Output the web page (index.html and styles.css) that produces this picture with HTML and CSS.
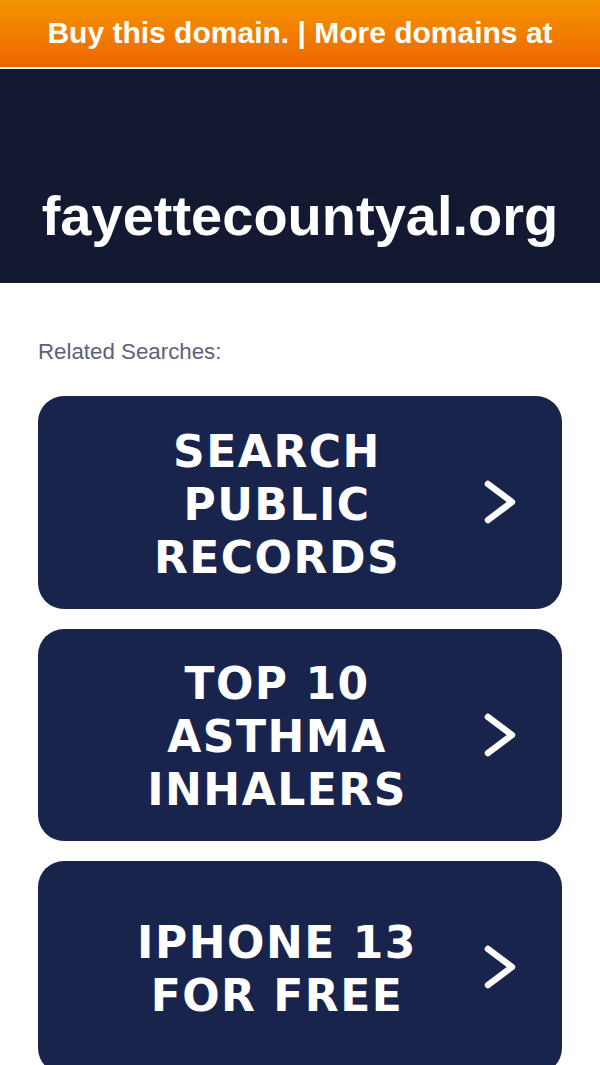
FILE: index.html
```html
<!DOCTYPE html>
<html lang="en">
<head>
<meta charset="utf-8">
<meta name="viewport" content="width=device-width, initial-scale=1">
<title>fayettecountyal.org</title>
<link rel="stylesheet" href="styles.css">
</head>
<body>
<div class="topbar">Buy this domain. | More domains at</div>
<header class="hero">
  <h1 class="domain">fayettecountyal.org</h1>
</header>
<main class="content">
  <p class="related">Related Searches:</p>
  <div class="links">
    <a class="link" href="#">
      <span class="link-text">SEARCH<br>PUBLIC<br>RECORDS</span>
      <svg class="chev" viewBox="0 0 32 48" width="32" height="48"><path d="M4 6 L28 24 L4 42" fill="none" stroke="#fff" stroke-width="6.5" stroke-linecap="round" stroke-linejoin="round"/></svg>
    </a>
    <a class="link" href="#">
      <span class="link-text">TOP 10<br>ASTHMA<br>INHALERS</span>
      <svg class="chev" viewBox="0 0 32 48" width="32" height="48"><path d="M4 6 L28 24 L4 42" fill="none" stroke="#fff" stroke-width="6.5" stroke-linecap="round" stroke-linejoin="round"/></svg>
    </a>
    <a class="link" href="#">
      <span class="link-text">IPHONE 13<br>FOR FREE</span>
      <svg class="chev" viewBox="0 0 32 48" width="32" height="48"><path d="M4 6 L28 24 L4 42" fill="none" stroke="#fff" stroke-width="6.5" stroke-linecap="round" stroke-linejoin="round"/></svg>
    </a>
  </div>
</main>
</body>
</html>
```
FILE: styles.css
```css
* { box-sizing: border-box; }
html, body { margin: 0; padding: 0; background: #fff; }
body { font-family: "Liberation Sans", Arial, sans-serif; overflow: hidden; }

.topbar {
  height: 69px;
  line-height: 66px;
  text-align: center;
  color: #fff;
  font-weight: bold;
  font-size: 30px;
  white-space: nowrap;
  background: linear-gradient(to bottom, #f59500, #ee6600);
  border-bottom: 2px solid #fff;
}

.hero {
  background: #121931;
  padding: 115px 0 35px;
  text-align: center;
}
.domain {
  margin: 0;
  color: #fff;
  font-size: 56px;
  line-height: 64px;
  font-weight: bold;
}

.content { padding: 0 38px; }
.related {
  margin: 56px 0 31px;
  font-size: 22.3px;
  line-height: 26px;
  color: #5b6279;
}
.links { display: flex; flex-direction: column; gap: 20px; }
.link {
  display: flex;
  align-items: center;
  height: 212.5px;
  padding: 0 46px 0 40px;
  background: #19244d;
  border-radius: 26px;
  text-decoration: none;
}
.link-text {
  flex: 1;
  text-align: center;
  color: #fff;
  font-family: "DejaVu Sans", Verdana, sans-serif;
  font-weight: bold;
  font-size: 44px;
  line-height: 53px;
  letter-spacing: 1.5px;
  margin-right: 8px;
  padding-top: 4px;
}
.chev { flex: none; display: block; }
```
